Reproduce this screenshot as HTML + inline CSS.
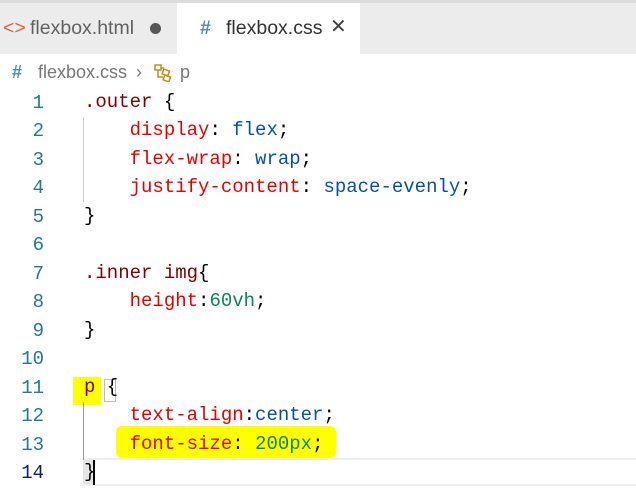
<!DOCTYPE html>
<html><head><style>
body{margin:0;width:636px;height:495px;background:#fff;overflow:hidden;position:relative;font-family:"Liberation Sans",sans-serif}
.top{position:absolute;left:0;top:0;width:636px;height:54px;background:#ececec;border-top:3px solid #dcdcdc;box-sizing:border-box}
.tab1{position:absolute;left:0;top:3px;width:177px;height:51px;background:#ececec}
.tab2{position:absolute;left:177px;top:3px;width:183px;height:51px;background:#fff}
.t{position:absolute;top:17px;font-size:19.5px;color:#616161}
.crumb{position:absolute;top:62px;font-size:18px;color:#777}
.ln{position:absolute;left:0;width:44px;text-align:right;font-family:"Liberation Mono",monospace;font-size:19px;color:#237893}
.code{position:absolute;left:84px;font-family:"Liberation Mono",monospace;font-size:19px;white-space:pre;color:#000}
.s{color:#800000}.p{color:#e50000}.v{color:#0451a5}.n{color:#098658}
</style></head><body>
<div class="top"></div>
<div class="tab1"></div>
<div class="tab2"></div>
<div class="t" style="left:3px;color:#d4693a">&lt;&gt;</div>
<div class="t" style="left:30px">flexbox.html</div>
<div style="position:absolute;left:150px;top:23px;width:11px;height:11px;border-radius:50%;background:#555"></div>
<div class="t" style="left:200px;color:#4d8fac;font-weight:bold">#</div>
<div class="t" style="left:226px;color:#333">flexbox.css</div>
<div class="t" style="left:330px;color:#444;font-size:20px;top:14px">✕</div>
<div class="crumb" style="left:12px;color:#4d8fac;font-weight:bold">#</div>
<div class="crumb" style="left:38px">flexbox.css</div>
<div class="crumb" style="left:136px">›</div>
<svg style="position:absolute;left:154px;top:64px" width="20" height="18" viewBox="0 0 20 18" fill="none" stroke="#c98a1b" stroke-width="1.5"><rect x="1" y="1" width="6" height="5"/><rect x="9" y="6" width="6" height="5" transform="rotate(20 12 8)"/><rect x="10" y="12" width="6" height="5" transform="rotate(20 13 14)"/><path d="M7 4h3M4 6v7h5"/></svg>
<div class="crumb" style="left:180px">p</div>
<div style="position:absolute;left:73px;top:377px;width:28px;height:28px;background:#ffff00"></div>
<div style="position:absolute;left:104px;top:379px;width:12px;height:23px;border:1px solid #bbb;box-sizing:border-box"></div>
<div style="position:absolute;left:116px;top:426px;width:220px;height:32px;background:#ffff00;border-radius:6px"></div>
<div style="position:absolute;left:82px;top:458px;width:560px;height:28px;border-top:2px solid #eee;border-bottom:2px solid #eee;box-sizing:border-box"></div>
<div style="position:absolute;left:83px;top:117px;width:1px;height:85px;background:#ccc"></div>
<div style="position:absolute;left:83px;top:402px;width:1px;height:60px;background:#999"></div>
<div style="position:absolute;left:83px;top:460px;width:10px;height:24px;background:#e5e5e5"></div>
<div style="position:absolute;left:93px;top:460px;width:2px;height:25px;background:#000"></div>
<div class="ln" style="top:92px">1</div><div class="ln" style="top:120px">2</div><div class="ln" style="top:149px">3</div><div class="ln" style="top:177px">4</div><div class="ln" style="top:206px">5</div><div class="ln" style="top:234px">6</div><div class="ln" style="top:263px">7</div><div class="ln" style="top:291px">8</div><div class="ln" style="top:320px">9</div><div class="ln" style="top:348px">10</div><div class="ln" style="top:377px">11</div><div class="ln" style="top:405px">12</div><div class="ln" style="top:434px">13</div><div class="ln" style="top:462px;color:#0b216f">14</div>
<div class="code" style="top:91px"><span class="s">.outer</span> {</div>
<div class="code" style="top:119px">    <span class="p">display</span>: <span class="v">flex</span>;</div>
<div class="code" style="top:148px">    <span class="p">flex-wrap</span>: <span class="v">wrap</span>;</div>
<div class="code" style="top:176px">    <span class="p">justify-content</span>: <span class="v">space-evenly</span>;</div>
<div class="code" style="top:205px">}</div>
<div class="code" style="top:262px"><span class="s">.inner img</span>{</div>
<div class="code" style="top:290px">    <span class="p">height</span>:<span class="n">60vh</span>;</div>
<div class="code" style="top:319px">}</div>
<div class="code" style="top:376px"><span class="s">p</span> {</div>
<div class="code" style="top:404px">    <span class="p">text-align</span>:<span class="v">center</span>;</div>
<div class="code" style="top:433px">    <span class="p">font-size</span>: <span class="n">200px</span>;</div>
<div class="code" style="top:461px">}</div>
</body></html>
